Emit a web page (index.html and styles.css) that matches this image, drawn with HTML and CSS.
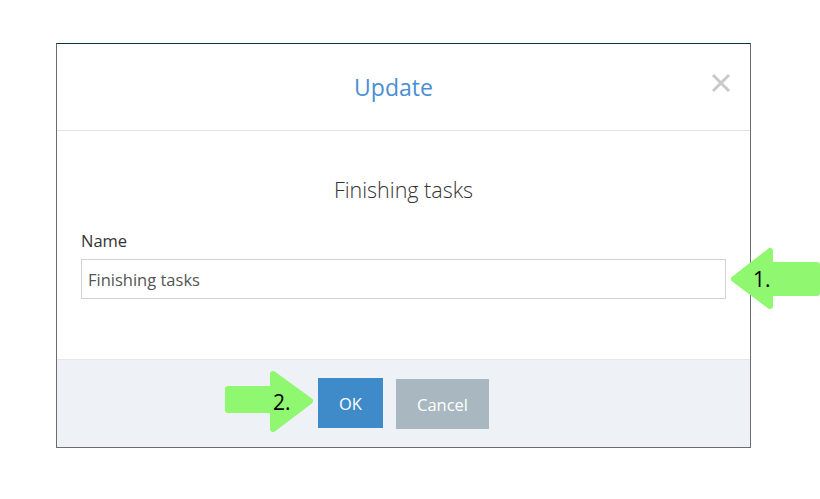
FILE: index.html
```html
<!DOCTYPE html>
<html lang="en">
<head>
    <meta charset="UTF-8">
    <title>Update</title>
    <link rel="stylesheet" href="styles.css">
</head>
<body>
    <div class="dialog">
        <div class="dialog-header">
            <h2 class="dialog-title">Update</h2>
            <svg class="close-btn" width="20" height="20" viewBox="0 0 20 20">
                <path d="M2 2 L18 18 M18 2 L2 18" stroke="#c9c9c9" stroke-width="3"/>
            </svg>
        </div>

        <div class="dialog-body">
            <h3 class="subtitle">Finishing tasks</h3>
            <label class="field-label" for="name">Name</label>
            <input type="text" id="name" class="field-input" value="Finishing tasks">
        </div>

        <div class="dialog-footer">
            <button class="btn btn-ok">OK</button>
            <button class="btn btn-cancel">Cancel</button>
        </div>
    </div>

    <!-- callout arrows -->
    <svg class="callout callout-1" width="94" height="68" viewBox="0 0 94 68">
        <polygon points="8,35 44,7 44,21 91,21 91,49 44,49 44,62" fill="#90f770" stroke="#90f770" stroke-width="6" stroke-linejoin="round"/>
        <text x="27" y="43" class="callout-text">1.</text>
    </svg>
    <svg class="callout callout-2" width="96" height="68" viewBox="0 0 96 68">
        <polygon points="7,22 52,22 52,7 89,34 52,62 52,43 7,43" fill="#90f770" stroke="#90f770" stroke-width="6" stroke-linejoin="round"/>
        <text x="52" y="43" class="callout-text">2.</text>
    </svg>
</body>
</html>
```

FILE: styles.css
```css
* {
    margin: 0;
    padding: 0;
    box-sizing: border-box;
}

body {
    font-family: "Open Sans", Arial, sans-serif;
    background: #fff;
    padding: 43px 0 0 56px;
    position: relative;
    height: 499px;
    overflow: hidden;
}

.dialog {
    width: 695px;
    background: #fff;
    border: 1px solid #6c6c6c;
    border-top-color: #13303e;
}

.dialog-header {
    position: relative;
    height: 87px;
    display: flex;
    align-items: center;
    justify-content: center;
    border-bottom: 1px solid #e3e3e3;
}

.dialog-title {
    font-size: 23px;
    font-weight: 400;
    color: #4a8fd3;
    margin-right: 20px;
    margin-top: -1px;
}

.close-btn {
    position: absolute;
    right: 19px;
    top: 29px;
}

.dialog-body {
    padding: 44px 24px 60px 24px;
}

.subtitle {
    text-align: center;
    font-size: 21.5px;
    font-weight: 300;
    color: #333;
    line-height: 30px;
    margin-bottom: 25px;
}

.field-label {
    display: block;
    font-size: 16.5px;
    color: #333;
    line-height: 22px;
    margin-bottom: 7px;
}

.field-input {
    display: block;
    width: 100%;
    height: 40px;
    padding: 0 6px;
    border: 1px solid #d2d2d2;
    font-family: inherit;
    font-size: 16.5px;
    color: #555;
}

.dialog-footer {
    height: 88px;
    background: #eef2f7;
    border-top: 1px solid #e4e7ec;
    display: flex;
    justify-content: center;
    align-items: flex-start;
    gap: 13px;
    padding-top: 18px;
}

.btn {
    height: 50px;
    border: none;
    color: #fff;
    font-family: inherit;
    font-size: 16.5px;
}

.btn-ok {
    width: 65px;
    background: #3f8ac9;
}

.btn-cancel {
    width: 93px;
    background: #a9b7c0;
    margin-top: 1px;
}

.callout {
    position: absolute;
}

.callout-1 {
    left: 726px;
    top: 244px;
}

.callout-2 {
    left: 221px;
    top: 367px;
}

.callout-text {
    font-family: "Open Sans", Arial, sans-serif;
    font-size: 21px;
    fill: #000;
}
```
